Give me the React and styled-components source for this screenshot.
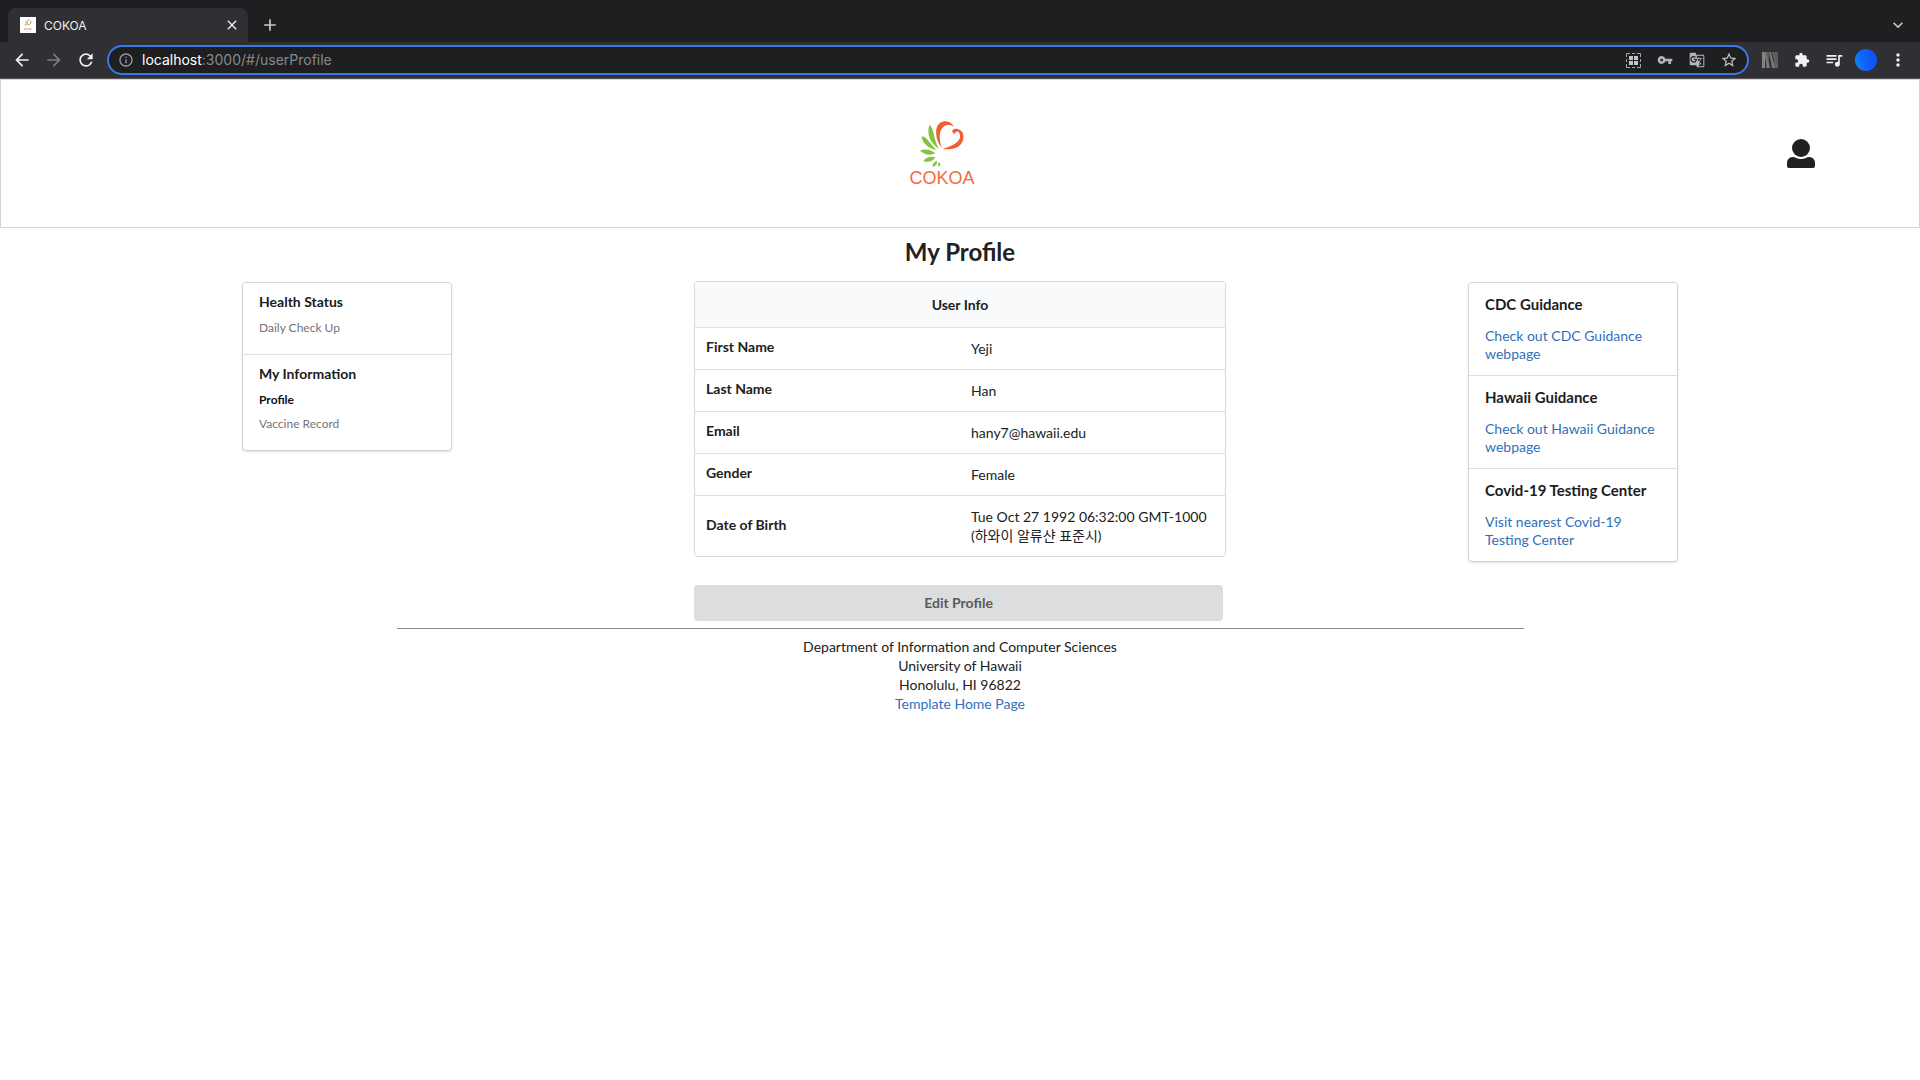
import React from "react";
import styled, { createGlobalStyle } from "styled-components";
import {
  MdArrowBack,
  MdArrowForward,
  MdRefresh,
  MdInfoOutline,
  MdVpnKey,
  MdGTranslate,
  MdStarBorder,
  MdExtension,
  MdQueueMusic,
  MdMoreVert,
  MdClose,
  MdAdd,
  MdExpandMore,
} from "react-icons/md";

const GlobalStyle = createGlobalStyle`
  *, *::before, *::after { box-sizing: border-box; }
  body {
    margin: 0;
    background: #fff;
    color: #212121;
    font: 14px/19px Lato, "Noto Sans CJK KR", sans-serif;
  }
  h1, h2, h3, p { margin: 0; }
  button { font: inherit; border: 0; cursor: pointer; }
  a { color: #2f71b8; text-decoration: none; }
`;

/* Browser frame */
const TabStrip = styled.div`
  display: flex;
  align-items: flex-end;
  height: 42px;
  padding: 0 4px 0 8px;
  background: #1e1f21;
  font-family: Inter, sans-serif;
`;

const Tab = styled.div`
  display: flex;
  align-items: center;
  gap: 8px;
  width: 240px;
  height: 34px;
  padding: 0 4px 0 12px;
  border-radius: 8px 8px 0 0;
  background: #2f2f34;
  color: #f1f1f3;
  font-size: 12px;
`;

const TabTitle = styled.span`
  flex: 1;
`;

const IconButton = styled.button`
  display: flex;
  flex: none;
  align-items: center;
  justify-content: center;
  width: ${(p) => p.$width || 32}px;
  height: ${(p) => p.$height || 30}px;
  padding: 0;
  background: none;
  color: ${(p) => p.$color || "#f1f1f3"};
`;

const Spacer = styled.div`
  flex: 1;
`;

const Toolbar = styled.div`
  display: flex;
  align-items: center;
  height: 37px;
  padding: 0 6px;
  border-bottom: 1px solid #56565a;
  background: #2f2f34;
`;

const AddressBar = styled.div`
  display: flex;
  flex: 1;
  align-items: center;
  height: 30px;
  margin: 0 5px;
  padding: 0 2px 0 1px;
  border: 2px solid #3b78e7;
  border-radius: 15px;
  background: #1e1f21;
`;

const Address = styled.div`
  flex: 1;
  color: #87888b;
  font: 14px/20px Inter, sans-serif;
  outline: 0;

  b {
    color: #fff;
    font-weight: 400;
  }
`;

const Avatar = styled.span`
  width: 22px;
  height: 22px;
  border-radius: 50%;
  background: linear-gradient(75deg, #0a8cf5 0%, #1263fb 40%, #0d4bfa 100%);
`;

/* Site header */
const SiteHeader = styled.header`
  display: grid;
  grid-template-columns: 1fr auto 1fr;
  align-items: center;
  height: 149px;
  padding: 0 104px 0 68px;
  border: 1px solid #d4d4d5;
`;

const Brand = styled.a`
  display: flex;
  grid-column: 2;
  flex-direction: column;
  align-items: center;
  gap: 2px;
  color: #f26b3f;
  font: 18px/18px "Liberation Sans", sans-serif;
`;

const AccountButton = styled.button`
  display: flex;
  justify-self: end;
  padding: 0;
  background: none;
`;

/* Page body */
const PageTitle = styled.h1`
  padding: 9px 0 14px;
  font-size: 24px;
  line-height: 30px;
  text-align: center;
`;

const Columns = styled.main`
  display: grid;
  grid-template-columns: 210px minmax(0, 532px) 210px;
  align-items: start;
  justify-content: space-between;
  padding: 0 242px;
`;

const Card = styled.nav`
  margin-top: 1px;
  border: 1px solid #d4d4d5;
  border-radius: 4px;
  box-shadow: 0 1px 2px rgba(34, 36, 38, 0.15);
`;

const CardSection = styled.section`
  padding: ${(p) => (p.$links ? "12px 16px" : "10px 16px 14px")};

  & + & {
    border-top: 1px solid #e0e0e1;
  }
`;

const CardTitle = styled.h2`
  margin-bottom: ${(p) => (p.$links ? 14 : 5)}px;
  color: #1b1c1d;
  font-size: ${(p) => (p.$links ? 15 : 14)}px;
  line-height: 18px;
`;

const MenuLink = styled.a`
  display: block;
  color: ${(p) => (p.$active ? "#111" : "#747474")};
  font-size: 12px;
  font-weight: ${(p) => (p.$active ? 700 : 400)};
  line-height: 24px;
`;

const GuidanceLink = styled.a`
  display: block;
  line-height: 18px;
`;

const InfoTable = styled.table`
  width: 100%;
  table-layout: fixed;
  border: 1px solid #d8d8d9;
  border-radius: 4px;
  border-spacing: 0;
`;

const TableHeading = styled.th`
  height: 45px;
  padding: 0;
  border-radius: 4px 4px 0 0;
  background: #f9fafb;
`;

const FieldName = styled.th`
  padding: 9px 11px 13px;
  border-top: 1px solid #e0e0e1;
  text-align: left;
`;

const FieldValue = styled.td`
  padding: 11px;
  border-top: 1px solid #e0e0e1;
`;

const EditButton = styled.button`
  width: calc(100% - 3px);
  height: 36px;
  margin-top: 28px;
  padding: 0 0 2px;
  border-radius: 4px;
  background: #dcddde;
  color: #5a5a5b;
  font-weight: 700;
`;

const Footer = styled.footer`
  max-width: 1127px;
  margin: 7px auto 0;
  padding-top: 8px;
  border-top: 1px solid #8a8a8a;
  text-align: center;
`;

const FlowerMark = () => (
  <svg width="44" height="46" viewBox="124 63 132 138" aria-hidden="true">
    <g fill="#f15f31">
      <path d="M189 144C176 128 169 104 174 84C180 60 212 56 226 80C210 70 194 76 187 90C180 106 184 128 189 144Z" />
      <path d="M192 147C222 138 240 128 244 112C246 96 234 88 228 101C223 102 220 96 221 91C228 82 244 86 251 97C259 112 252 132 238 140C224 148 207 149 192 147Z" />
    </g>
    <g fill="#82c341">
      <path d="M181 146C156 132 143 104 152 75C167 83 163 116 181 146Z" />
      <path d="M174 150C150 145 131 132 129 109C146 110 156 136 174 150Z" />
      <path d="M170 160C152 169 134 161 124 152C138 144 158 150 170 160Z" />
      <path d="M170 172C164 184 148 189 134 183C142 172 158 168 170 172Z" />
      <path d="M175 183C176 193 170 200 162 200C161 192 167 185 175 183ZM181 186C186 190 186 196 181 200C177 196 178 190 181 186Z" />
    </g>
  </svg>
);

const Favicon = () => (
  <svg width="16" height="16" viewBox="0 0 16 16" aria-hidden="true">
    <path fill="#fff" d="M0 0h16v16H0z" />
    <path fill="none" stroke="#f28b64" d="M8 8C6 4 8 2 10 3M8 8Q12 7 11 4" />
    <path fill="none" stroke="#a3d078" d="M7 8Q5 6 6 4M6 9L5 7" />
    <path stroke="#f6b9a2" strokeWidth="2" strokeDasharray="2 .5" d="M4 12h8" />
  </svg>
);

const QrIcon = () => (
  <svg width="15" height="15" viewBox="0 0 15 15" aria-hidden="true">
    <path fill="none" stroke="#a4a5a8" d="M.5 4V.5H4M6 .5h3M11 .5h3.500V4M14.500 6v3M14.500 11v3.500H11M9 14.500H6M4 14.500H.5V11M.5 9V6" />
    <path fill="#c4c5c8" d="M3 3h4v4H3zM8 3h4v4H8zM3 8h4v4H3zM8 8h4v4H8z" />
  </svg>
);

const StripesIcon = () => (
  <svg width="16" height="16" viewBox="0 0 16 16" aria-hidden="true">
    <path fill="#5b5b5b" d="M4 0h3v16H4zM12 0h4v16h-4z" />
    <path fill="#858585" d="M0 0h3v16H0z" />
    <path fill="#787878" d="M2 0h2l4 16H5zM7 0h2l4 16h-3z" />
    <path fill="#636363" d="M10 0h2l4 16h-2z" />
  </svg>
);

const PersonIcon = () => (
  <svg width="28" height="29" viewBox="0 0 28 29" fill="#212121" aria-hidden="true">
    <circle cx="14" cy="9" r="9" />
    <path d="M6 18C8 18 10 20 14 20S20 18 22 18C26 18 28 21 28 24V27Q28 29 26 29H2Q0 29 0 27V24C0 21 2 18 6 18Z" />
  </svg>
);

const FIELDS = [
  ["First Name", "Yeji"],
  ["Last Name", "Han"],
  ["Email", "hany7@hawaii.edu"],
  ["Gender", "Female"],
  ["Date of Birth", "Tue Oct 27 1992 06:32:00 GMT-1000 (하와이 알류샨 표준시)"],
];

const MENU = [
  ["Health Status", ["Daily Check Up"]],
  ["My Information", ["Profile", "Vaccine Record"]],
];

const GUIDANCE = [
  ["CDC Guidance", "Check out CDC Guidance webpage"],
  ["Hawaii Guidance", "Check out Hawaii Guidance webpage"],
  ["Covid-19 Testing Center", "Visit nearest Covid-19 Testing Center"],
];

const BrowserFrame = () => (
  <>
    <TabStrip>
      <Tab>
        <Favicon />
        <TabTitle>COKOA</TabTitle>
        <IconButton $width={24} aria-label="Close tab"><MdClose size={16} /></IconButton>
      </Tab>
      <IconButton $width={44} $height={34} $color="#c6c7ca" aria-label="New tab"><MdAdd size={20} /></IconButton>
      <Spacer />
      <IconButton $width={36} $height={34} $color="#c6c7ca" aria-label="Search tabs"><MdExpandMore size={20} /></IconButton>
    </TabStrip>
    <Toolbar>
      <IconButton aria-label="Back"><MdArrowBack size={20} /></IconButton>
      <IconButton $color="#7d7d82" aria-label="Forward"><MdArrowForward size={20} /></IconButton>
      <IconButton aria-label="Reload"><MdRefresh size={20} /></IconButton>
      <AddressBar>
        <IconButton $color="#9a9b9f" aria-label="Site information"><MdInfoOutline size={16} /></IconButton>
        <Address role="textbox" aria-label="Address" tabIndex={0}><b>localhost</b>:3000/#/userProfile</Address>
        <IconButton aria-label="QR code"><QrIcon /></IconButton>
        <IconButton $color="#b4b5b8" aria-label="Passwords"><MdVpnKey size={16} /></IconButton>
        <IconButton $color="#b4b5b8" aria-label="Translate"><MdGTranslate size={16} /></IconButton>
        <IconButton $color="#c4c5c8" aria-label="Bookmark"><MdStarBorder size={18} /></IconButton>
      </AddressBar>
      <IconButton aria-label="Stripes extension"><StripesIcon /></IconButton>
      <IconButton aria-label="Extensions"><MdExtension size={16} /></IconButton>
      <IconButton aria-label="Media"><MdQueueMusic size={20} /></IconButton>
      <IconButton aria-label="Browser profile"><Avatar /></IconButton>
      <IconButton aria-label="Menu"><MdMoreVert size={20} /></IconButton>
    </Toolbar>
  </>
);

export default function App() {
  return (
    <>
      <GlobalStyle />
      <BrowserFrame />
      <SiteHeader>
        <Brand href="#/">
          <FlowerMark />
          COKOA
        </Brand>
        <AccountButton aria-label="Account"><PersonIcon /></AccountButton>
      </SiteHeader>
      <PageTitle>My Profile</PageTitle>
      <Columns>
        <Card aria-label="Menu">
          {MENU.map(([title, items]) => (
            <CardSection key={title}>
              <CardTitle>{title}</CardTitle>
              {items.map((item) => (
                <MenuLink key={item} href="#/" $active={item === "Profile"}>{item}</MenuLink>
              ))}
            </CardSection>
          ))}
        </Card>
        <div>
          <InfoTable>
            <thead>
              <tr><TableHeading colSpan={2}>User Info</TableHeading></tr>
            </thead>
            <tbody>
              {FIELDS.map(([name, value]) => (
                <tr key={name}>
                  <FieldName scope="row">{name}</FieldName>
                  <FieldValue>{value}</FieldValue>
                </tr>
              ))}
            </tbody>
          </InfoTable>
          <EditButton type="button">Edit Profile</EditButton>
        </div>
        <Card aria-label="Guidance">
          {GUIDANCE.map(([title, text]) => (
            <CardSection key={title} $links>
              <CardTitle $links>{title}</CardTitle>
              <GuidanceLink href="#/">{text}</GuidanceLink>
            </CardSection>
          ))}
        </Card>
      </Columns>
      <Footer>
        <p>Department of Information and Computer Sciences</p>
        <p>University of Hawaii</p>
        <p>Honolulu, HI 96822</p>
        <a href="#/">Template Home Page</a>
      </Footer>
    </>
  );
}
